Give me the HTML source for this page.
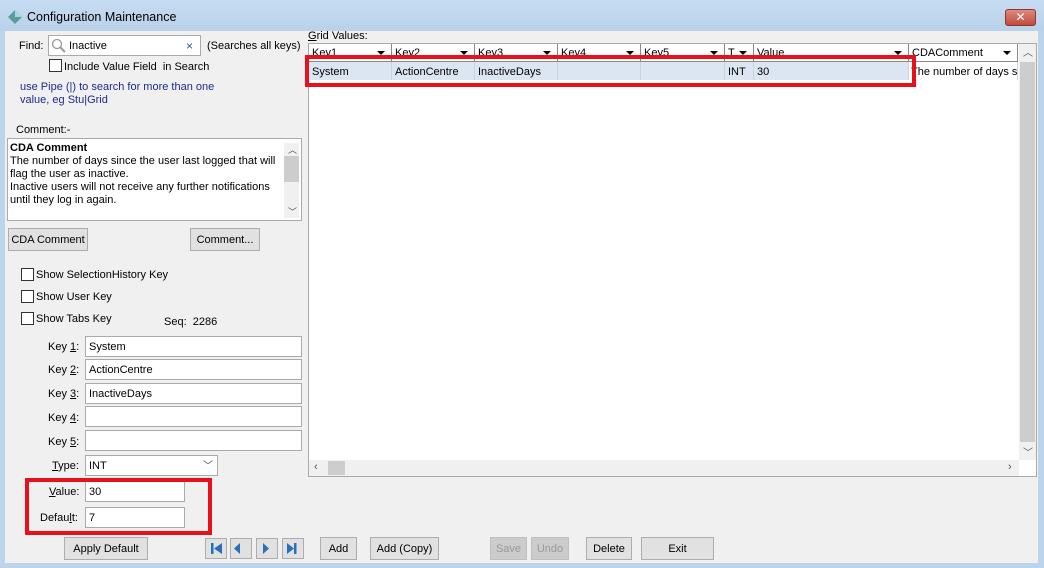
<!DOCTYPE html>
<html><head><meta charset="utf-8"><style>
*{box-sizing:border-box;margin:0;padding:0}
body{width:1044px;height:568px;overflow:hidden;background:#bcd4ec;font-family:"Liberation Sans","DejaVu Sans",sans-serif;font-size:11px;color:#000;position:relative}
.a{position:absolute;white-space:nowrap}
.title{left:0;top:0;width:1044px;height:31px;background:linear-gradient(#c6dcf2,#b9d1ea)}
.client{left:5px;top:31px;width:1033px;height:532px;background:#f0f0f0}
.tb{background:#fff;border:1px solid #aaa;height:21px;padding:4px 3px 0;font-size:11px}
.btn{background:#e1e1e1;border:1px solid #adadad;text-align:center;height:23px;line-height:23px;font-size:11px}
.cb{width:13px;height:13px;border:1px solid #333;background:#fff}
.red{border:4px solid #e8101c}
.hd{top:44px;height:18px;border-right:1px solid #888;border-bottom:1px solid #888;background:#fff;padding:3px 3px 0;font-size:11px;overflow:hidden}
.hd:after{content:"";position:absolute;right:6px;top:7px;border-left:4px solid transparent;border-right:4px solid transparent;border-top:4px solid #000}
.cell{top:62px;height:18px;padding:4px 3px 0;font-size:11px;background:#dce6f2;border-right:1px solid #c8d4e2}
.nav{background:#e1e1e1;border:1px solid #adadad;width:22px;height:21px;top:538px}
</style></head><body>
<div class="a title"></div>
<svg class="a" style="left:8px;top:10px" width="14" height="14"><polygon points="7,0 14,7 7,14 0,7" fill="#5a9aa0"/><polygon points="7,0 14,7 7,7" fill="#a8d8dc"/></svg>
<div class="a" style="left:27px;top:10px;font-size:12.5px;color:#000">Configuration Maintenance</div>
<div class="a" style="left:1005px;top:9px;width:31px;height:17px;background:linear-gradient(#dc8a7e,#c14a3a);border:1px solid #8a3a30;border-radius:3px;color:#fff;text-align:center;font-weight:bold;font-size:12px;line-height:15px">✕</div>
<div class="a client"></div>

<div class="a" style="left:19px;top:40px">Find:</div>
<div class="a tb" style="left:48px;top:35px;width:153px;height:21px;padding-left:20px">Inactive</div>
<svg class="a" style="left:51px;top:38px" width="15" height="15"><circle cx="6" cy="6" r="4.5" fill="none" stroke="#999" stroke-width="1.3"/><line x1="9" y1="9" x2="14" y2="14" stroke="#999" stroke-width="2"/></svg>
<div class="a" style="left:186px;top:39px;color:#2a5aa0;font-size:12px">×</div>
<div class="a" style="left:207px;top:40px">(Searches all keys)</div>
<div class="a cb" style="left:49px;top:59px"></div>
<div class="a" style="left:64px;top:61px">Include Value Field&nbsp; in Search</div>
<div class="a" style="left:20px;top:81px;color:#1e2a8a;line-height:13px">use Pipe (|) to search for more than one<br>value, eg Stu|Grid</div>
<div class="a" style="left:16px;top:124px">Comment:-</div>
<div class="a" style="left:7px;top:138px;width:295px;height:83px;background:#fff;border:1px solid #aaa"></div>
<div class="a" style="left:10px;top:142px;line-height:13px"><b>CDA Comment</b><br>The number of days since the user last logged that will<br>flag the user as inactive.<br>Inactive users will not receive any further notifications<br>until they log in again.</div>
<div class="a" style="left:284px;top:143px;width:15px;height:75px;background:#f0f0f0"></div>
<div class="a" style="left:284px;top:156px;width:15px;height:26px;background:#cdcdcd"></div>
<div class="a" style="left:288px;top:143px;font-size:9px;color:#555">︿</div>
<div class="a" style="left:288px;top:205px;font-size:9px;color:#555">﹀</div>
<div class="a btn" style="left:8px;top:228px;width:80px">CDA Comment</div>
<div class="a btn" style="left:190px;top:228px;width:70px">Comment...</div>
<div class="a cb" style="left:21px;top:268px"></div><div class="a" style="left:36px;top:269px">Show SelectionHistory Key</div>
<div class="a cb" style="left:21px;top:290px"></div><div class="a" style="left:36px;top:291px">Show User Key</div>
<div class="a cb" style="left:21px;top:312px"></div><div class="a" style="left:36px;top:313px">Show Tabs Key</div>
<div class="a" style="left:164px;top:316px">Seq:&nbsp; 2286</div>
<div class="a" style="left:48px;top:341px">Key <u>1</u>:</div><div class="a tb" style="left:85px;top:336px;width:217px">System</div>
<div class="a" style="left:48px;top:364px">Key <u>2</u>:</div><div class="a tb" style="left:85px;top:359px;width:217px">ActionCentre</div>
<div class="a" style="left:48px;top:388px">Key <u>3</u>:</div><div class="a tb" style="left:85px;top:383px;width:217px">InactiveDays</div>
<div class="a" style="left:48px;top:412px">Key <u>4</u>:</div><div class="a tb" style="left:85px;top:406px;width:217px"></div>
<div class="a" style="left:48px;top:436px">Key <u>5</u>:</div><div class="a tb" style="left:85px;top:430px;width:217px"></div>
<div class="a" style="left:52px;top:460px"><u>T</u>ype:</div><div class="a tb" style="left:85px;top:455px;width:133px">INT</div>
<div class="a" style="left:203px;top:457px;font-size:10px;color:#444">﹀</div>
<div class="a" style="left:49px;top:486px"><u>V</u>alue:</div><div class="a tb" style="left:85px;top:481px;width:100px">30</div>
<div class="a" style="left:40px;top:512px">Defau<u>l</u>t:</div><div class="a tb" style="left:85px;top:507px;width:100px">7</div>
<div class="a red" style="left:25px;top:478px;width:187px;height:57px"></div>

<div class="a" style="left:308px;top:30px"><u>G</u>rid Values:</div>
<div class="a" style="left:308px;top:43px;width:729px;height:434px;background:#fff;border:1px solid #aaa"></div>
<div class="a hd" style="left:309px;width:83px">Key1</div>
<div class="a hd" style="left:392px;width:83px">Key2</div>
<div class="a hd" style="left:475px;width:83px">Key3</div>
<div class="a hd" style="left:558px;width:83px">Key4</div>
<div class="a hd" style="left:641px;width:84px">Key5</div>
<div class="a hd" style="left:725px;width:29px">T</div>
<div class="a hd" style="left:754px;width:155px">Value</div>
<div class="a hd" style="left:909px;width:109px">CDAComment</div>
<div class="a cell" style="left:309px;width:83px">System</div>
<div class="a cell" style="left:392px;width:83px">ActionCentre</div>
<div class="a cell" style="left:475px;width:83px">InactiveDays</div>
<div class="a cell" style="left:558px;width:83px"></div>
<div class="a cell" style="left:641px;width:84px"></div>
<div class="a cell" style="left:725px;width:29px">INT</div>
<div class="a cell" style="left:754px;width:155px">30</div>
<div class="a cell" style="left:909px;width:109px;background:#fff;overflow:hidden;padding-left:2px">The number of days s</div>
<div class="a red" style="left:305px;top:55px;width:611px;height:32px"></div>
<div class="a" style="left:1019px;top:44px;width:17px;height:416px;background:#f0f0f0"></div>
<div class="a" style="left:1020px;top:62px;width:15px;height:380px;background:#cdcdcd"></div>
<div class="a" style="left:1023px;top:44px;font-size:10px;color:#555">︿</div>
<div class="a" style="left:1023px;top:444px;font-size:10px;color:#555">﹀</div>
<div class="a" style="left:309px;top:460px;width:710px;height:16px;background:#f0f0f0"></div>
<div class="a" style="left:328px;top:461px;width:17px;height:14px;background:#cdcdcd"></div>
<div class="a" style="left:314px;top:461px;font-size:11px;color:#555">‹</div>
<div class="a" style="left:1008px;top:461px;font-size:11px;color:#555">›</div>

<div class="a btn" style="left:64px;top:537px;width:84px">Apply Default</div>
<div class="a nav" style="left:205px"></div><div class="a nav" style="left:230px"></div><div class="a nav" style="left:256px"></div><div class="a nav" style="left:282px"></div>
<svg class="a" style="left:205px;top:538px" width="100" height="21" fill="#2a6fb8"><rect x="6" y="5" width="2.5" height="11"/><polygon points="17,5 17,16 9,10.5"/><polygon points="35,5 35,16 29,10.5"/><polygon points="58,5 58,16 64,10.5"/><polygon points="82,5 82,16 89,10.5"/><rect x="89" y="5" width="2.5" height="11"/></svg>
<div class="a btn" style="left:320px;top:537px;width:37px">Add</div>
<div class="a btn" style="left:370px;top:537px;width:69px">Add (Copy)</div>
<div class="a btn" style="left:490px;top:537px;width:37px;color:#999;background:#ccc;border-color:#bfbfbf">Save</div>
<div class="a btn" style="left:531px;top:537px;width:38px;color:#999;background:#ccc;border-color:#bfbfbf">Undo</div>
<div class="a btn" style="left:586px;top:537px;width:46px">Delete</div>
<div class="a btn" style="left:641px;top:537px;width:73px">Exit</div>
</body></html>
